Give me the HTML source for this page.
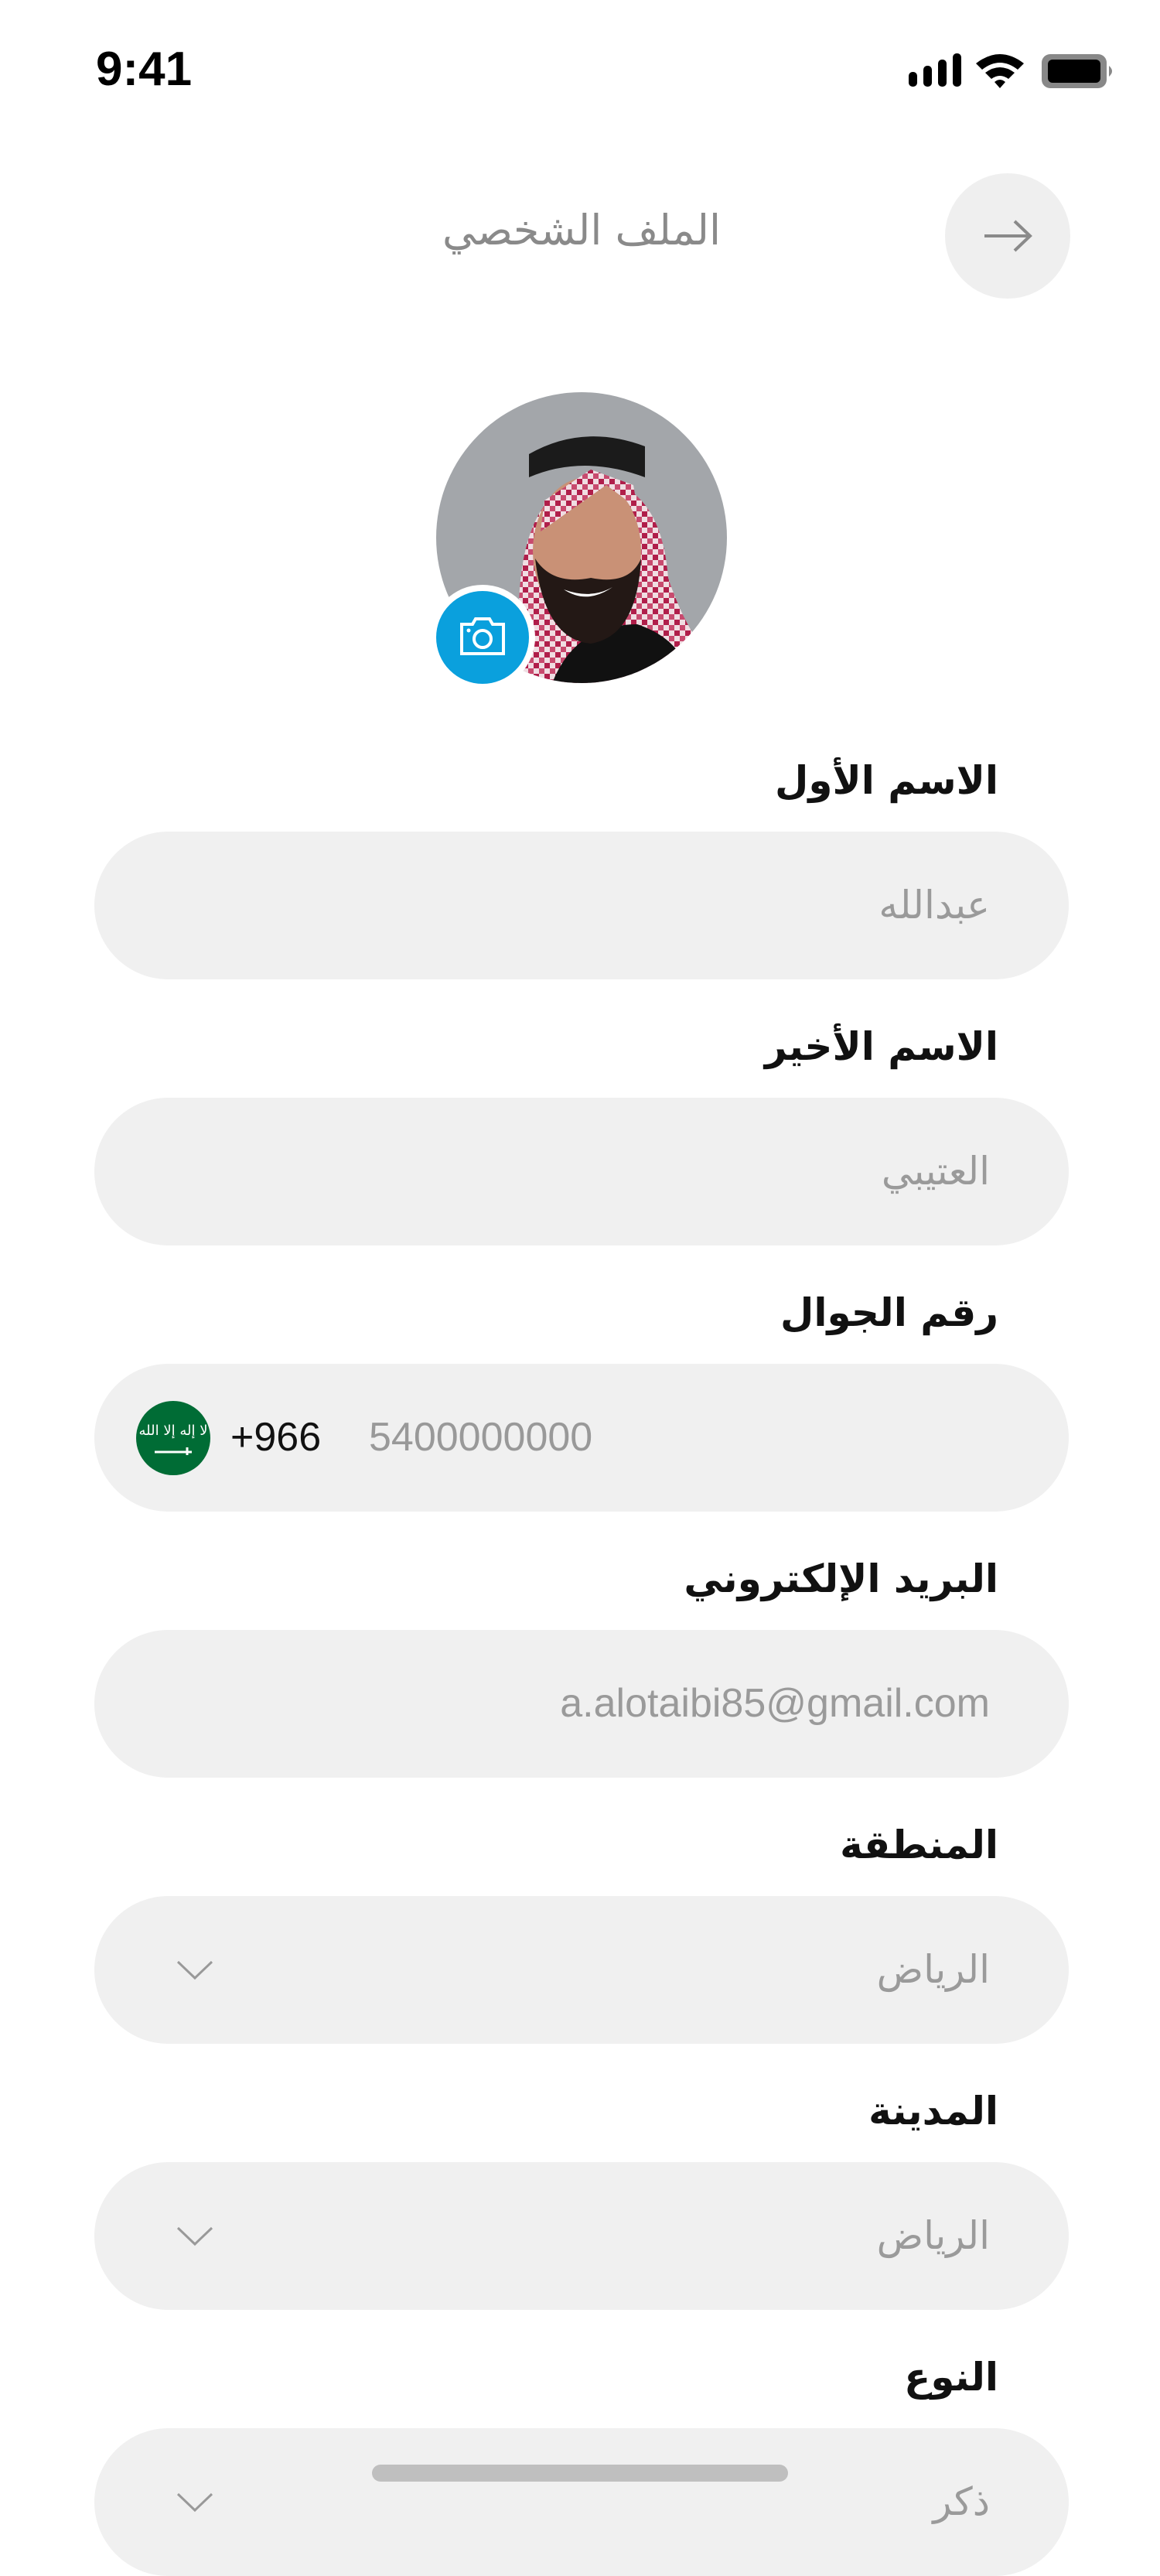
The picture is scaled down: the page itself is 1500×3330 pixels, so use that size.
<!DOCTYPE html>
<html><head><meta charset="utf-8">
<style>
*{margin:0;padding:0;box-sizing:border-box}
body{width:1500px;height:3248px;background:#fff;position:relative;overflow:hidden;font-family:"DejaVu Sans","Liberation Sans",sans-serif}
.abs{position:absolute}
.lbl{position:absolute;right:209px;font-weight:bold;font-size:50px;color:#111;direction:rtl;line-height:60px}
.fld{position:absolute;left:122px;width:1260px;height:191px;border-radius:96px;background:#f0f0f0}
.val{position:absolute;right:102px;top:0;line-height:191px;font-size:50px;color:#9a9a9a;direction:rtl}
.chev{position:absolute;left:105px;top:80px}
</style></head><body>
<div class="abs" style="left:124px;top:54px;font:bold 62px 'Liberation Sans',sans-serif;color:#000">9:41</div>
<svg class="abs" style="left:1170px;top:64px" width="280" height="56" viewBox="0 0 280 56">
<rect x="5" y="29" width="11" height="19" rx="5"/><rect x="24" y="21" width="11" height="27" rx="5"/><rect x="43" y="13" width="11" height="35" rx="5"/><rect x="62" y="5" width="11" height="43" rx="5"/>
<path d="M92 18 Q123 -6 154 18 L146 26 Q123 8 100 26Z"/><path d="M104 30 Q123 16 142 30 L134 38 Q123 30 112 38Z"/><path d="M116 42 Q123 36 130 42 L123 50Z"/>
<rect x="177" y="6" width="84" height="44" rx="11" fill="#888"/><rect x="185" y="13" width="68" height="30" rx="6" fill="#000"/><path d="M264 21 Q272 28 264 35Z" fill="#888"/>
</svg>
<div class="abs" style="left:1222px;top:224px;width:162px;height:162px;border-radius:50%;background:#efefef"></div>
<svg class="abs" style="left:1270px;top:282px" width="66" height="46" viewBox="0 0 66 46"><path d="M3 23H62M42 4L62 23L42 42" fill="none" stroke="#8a8a8a" stroke-width="4"/></svg>
<div class="abs" style="left:452px;top:266px;width:600px;text-align:center;font-size:54px;color:#8a8a8a;direction:rtl">الملف الشخصي</div>
<svg class="abs" style="left:564px;top:507px" width="376" height="376" viewBox="0 0 376 376">
<defs><clipPath id="c"><circle cx="188" cy="188" r="188"/></clipPath>
<pattern id="p" width="14" height="14" patternUnits="userSpaceOnUse"><rect width="14" height="14" fill="#f0dde2"/><rect width="7" height="7" fill="#b01e4a"/><rect x="7" y="7" width="7" height="7" fill="#c84a6e"/></pattern></defs>
<g clip-path="url(#c)">
<rect width="376" height="376" fill="#a3a6aa"/>
<path d="M110 360 Q90 140 190 110 Q290 110 300 240 Q330 330 376 360 L376 376 L100 376Z" fill="url(#p)"/>
<path d="M120 80 Q190 40 270 70 L270 110 Q190 80 120 110Z" fill="#1b1b1b"/>
<path d="M150 376 Q180 300 260 300 Q320 320 330 376Z" fill="#111"/>
<ellipse cx="195" cy="205" rx="70" ry="95" fill="#c99176"/>
<path d="M128 215 Q140 320 200 325 Q260 315 265 215 Q250 250 200 240 Q150 250 128 215Z" fill="#231815"/>
<path d="M165 255 Q195 275 228 252 Q200 268 165 255Z" fill="#fff"/>
<path d="M135 180 L220 120 L260 150 L255 120 L200 100 L140 140Z" fill="url(#p)"/>
</g></svg>
<div class="abs" style="left:556px;top:756px;width:136px;height:136px;border-radius:50%;background:#fff"></div>
<div class="abs" style="left:564px;top:764px;width:120px;height:120px;border-radius:50%;background:#0aa0dd"></div>
<svg class="abs" style="left:594px;top:797px" width="60" height="52" viewBox="0 0 60 52"><path d="M3 10H17L21 3H39L43 10H57V48H3Z" fill="none" stroke="#fff" stroke-width="4"/><circle cx="30" cy="29" r="11" fill="none" stroke="#fff" stroke-width="4"/><circle cx="12" cy="18" r="2.5" fill="#fff"/></svg>

<div class="lbl" style="top:979px">الاسم الأول</div>
<div class="fld" style="top:1075px"><div class="val">عبدالله</div></div>
<div class="lbl" style="top:1323px">الاسم الأخير</div>
<div class="fld" style="top:1419px"><div class="val">العتيبي</div></div>
<div class="lbl" style="top:1667px">رقم الجوال</div>
<div class="fld" style="top:1763px">
<svg class="abs" style="left:54px;top:48px" width="96" height="96" viewBox="0 0 96 96"><circle cx="48" cy="48" r="48" fill="#006c35"/><text x="48" y="44" text-anchor="middle" font-size="18" fill="#fff" font-family="DejaVu Sans">لا إله إلا الله</text><path d="M24 66H72M66 60V70" stroke="#fff" stroke-width="3"/></svg>
<div class="abs" style="left:176px;top:0;font:52px 'Liberation Sans',sans-serif;line-height:191px;color:#111">+966</div>
<div class="abs" style="left:355px;top:0;font:52px 'Liberation Sans',sans-serif;line-height:191px;color:#999">5400000000</div>
</div>
<div class="lbl" style="top:2011px">البريد الإلكتروني</div>
<div class="fld" style="top:2107px"><div class="val" style="direction:ltr;font-family:'Liberation Sans',sans-serif;font-size:52px">a.alotaibi85@gmail.com</div></div>
<div class="lbl" style="top:2355px">المنطقة</div>
<div class="fld" style="top:2451px"><div class="val">الرياض</div><svg class="chev" width="50" height="30" viewBox="0 0 50 30"><path d="M3 5L25 26L47 5" fill="none" stroke="#999" stroke-width="3"/></svg></div>
<div class="lbl" style="top:2699px">المدينة</div>
<div class="fld" style="top:2795px"><div class="val">الرياض</div><svg class="chev" width="50" height="30" viewBox="0 0 50 30"><path d="M3 5L25 26L47 5" fill="none" stroke="#999" stroke-width="3"/></svg></div>
<div class="lbl" style="top:3043px">النوع</div>
<div class="fld" style="top:3139px"><div class="val">ذكر</div><svg class="chev" width="50" height="30" viewBox="0 0 50 30"><path d="M3 5L25 26L47 5" fill="none" stroke="#999" stroke-width="3"/></svg></div>
<div class="abs" style="left:481px;top:3186px;width:538px;height:22px;border-radius:11px;background:#bfbfbf"></div>
</body></html>
